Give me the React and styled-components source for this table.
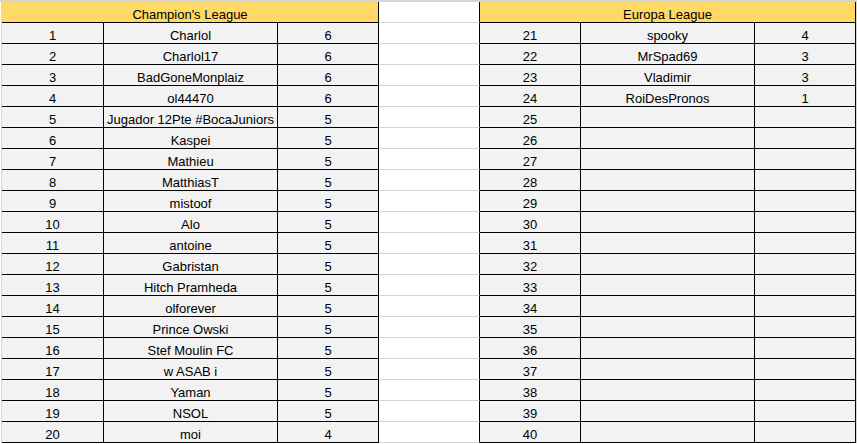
import React from "react";
import styled, { createGlobalStyle } from "styled-components";

const GlobalStyle = createGlobalStyle`
  html, body {
    margin: 0;
    padding: 0;
    background: #ffffff;
  }
  body {
    font-family: "Liberation Sans", Arial, sans-serif;
    font-size: 13px;
    color: #000000;
  }
`;

const GRID = "#d4d4d4";
const FILL = "#f2f2f2";
const HEAD = "#ffd966";

const Sheet = styled.div`
  display: flex;
  flex-direction: column;
  width: max-content;
  padding-left: 1px;
  border-top: 2px solid ${GRID};
`;

const Row = styled.div`
  display: flex;
  border-left: 1px solid ${GRID};
  border-right: 1px solid ${GRID};
`;

const Cell = styled.div`
  width: ${(p) => p.$w}px;
  height: 19px;
  padding-bottom: 1px;
  flex: none;
  box-sizing: content-box;
  display: flex;
  align-items: flex-end;
  justify-content: center;
  line-height: 13px;
  white-space: nowrap;
  overflow: hidden;
  background: ${FILL};
  border-right: 1px solid #000;
  border-bottom: 1px solid #000;
`;

const HeaderCell = styled(Cell)`
  background: ${HEAD};
`;

const Spacer = styled.div`
  width: 100px;
  height: 20px;
  flex: none;
  background: #ffffff;
  border-right: 1px solid #000;
  border-bottom: 1px solid ${GRID};
`;

const champions = [
  ["Charlol", 6],
  ["Charlol17", 6],
  ["BadGoneMonplaiz", 6],
  ["ol44470", 6],
  ["Jugador 12Pte #BocaJuniors", 5],
  ["Kaspei", 5],
  ["Mathieu", 5],
  ["MatthiasT", 5],
  ["mistoof", 5],
  ["Alo", 5],
  ["antoine", 5],
  ["Gabristan", 5],
  ["Hitch Pramheda", 5],
  ["olforever", 5],
  ["Prince Owski", 5],
  ["Stef Moulin FC", 5],
  ["w ASAB i", 5],
  ["Yaman", 5],
  ["NSOL", 5],
  ["moi", 4],
];

const europa = [
  ["spooky", 4],
  ["MrSpad69", 3],
  ["Vladimir", 3],
  ["RoiDesPronos", 1],
];

export default function App() {
  return (
    <>
      <GlobalStyle />
      <Sheet>
        <Row>
          <HeaderCell $w={376}>Champion's League</HeaderCell>
          <Spacer />
          <HeaderCell $w={375}>Europa League</HeaderCell>
        </Row>
        {champions.map(([name, pts], i) => {
          const e = europa[i] || ["", ""];
          return (
            <Row key={i}>
              <Cell $w={101}>{i + 1}</Cell>
              <Cell $w={173}>{name}</Cell>
              <Cell $w={100}>{pts}</Cell>
              <Spacer />
              <Cell $w={100}>{i + 21}</Cell>
              <Cell $w={173}>{e[0]}</Cell>
              <Cell $w={100}>{e[1]}</Cell>
            </Row>
          );
        })}
      </Sheet>
    </>
  );
}
